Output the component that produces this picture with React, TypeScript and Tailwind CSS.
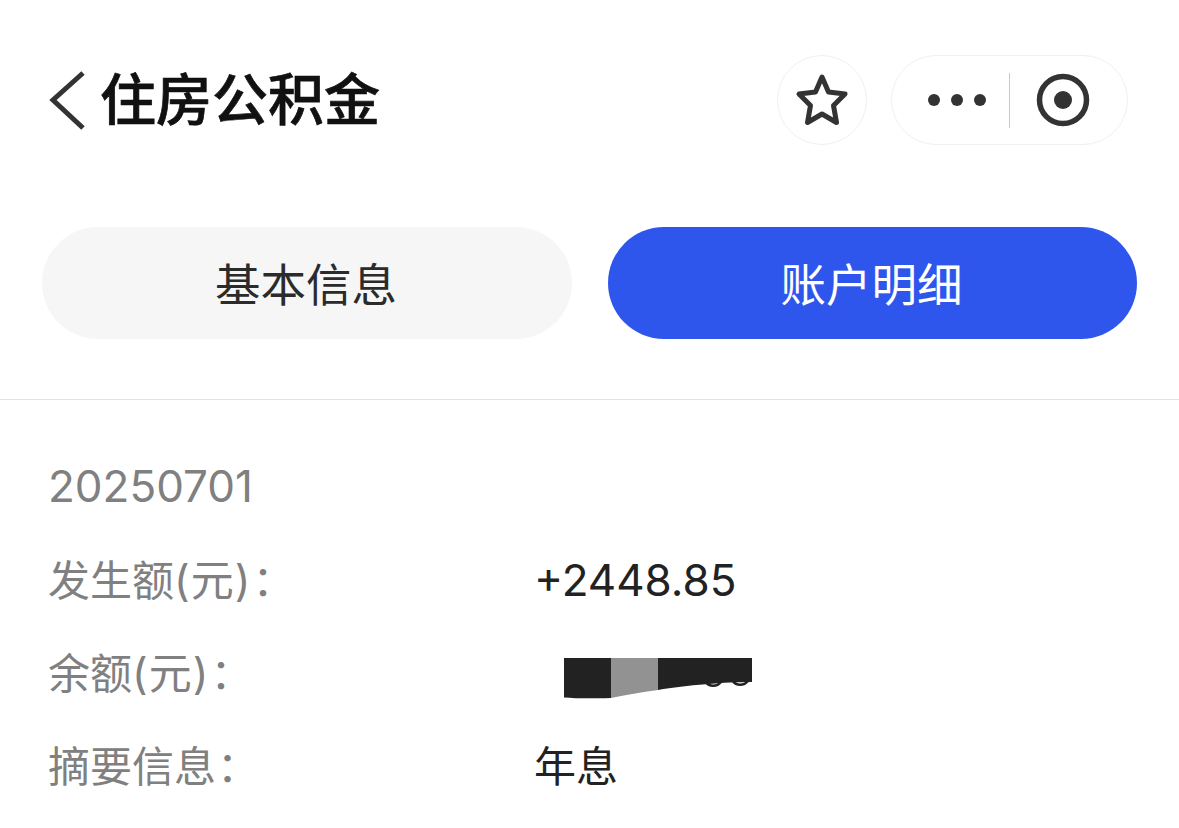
const cjk = "font-['Inter','Noto_Sans_CJK_SC',sans-serif]";

function Row({ label, unit, value, small, redacted }: { label: string; unit?: string; value?: string; small?: boolean; redacted?: boolean }) {
  return (
    <div className="flex h-[93px] items-center">
      <div className="w-[488px] shrink-0 text-[#808080]">
        {label}
        {unit && <span className="tracking-[1px] text-[43px]">{unit}</span>}
        <span className="ml-[1px]">：</span>
      </div>
      {redacted ? (
        <svg width="220" height="50" viewBox="0 0 220 50" fill="none" className="overflow-visible">
          <path d="M170 33C173 38 181 38 185 33M197 32C200 37 208 37 212 32" stroke="#222222" strokeWidth="2.500" />
          <path d="M28 9H75V49C55 49.500 40 49.500 28 48.500Z" fill="#222222" />
          <path d="M75 9H122V41C105 43 90 46 75 49Z" fill="#929292" />
          <path d="M122 9H216V33C190 33 150 36 122 41Z" fill="#222222" />
        </svg>
      ) : small ? (
        <div className="ml-[-2px] text-[#222222]">{value}</div>
      ) : (
        <div className="ml-[-2px] pb-[2px] text-[44px] text-[#222222]">{value}</div>
      )}
    </div>
  );
}

export default function App() {
  return (
    <div className={`h-[828px] w-[1179px] overflow-hidden bg-white ${cjk}`}>
      <header className="flex h-[200px] items-start justify-between pl-[48px] pr-[51px] pt-[55px]">
        <div className="flex h-[90px] items-center gap-[14px]">
          <svg width="38" height="60" viewBox="0 0 38 60" fill="none">
            <path d="M35 3L5 30L35 58" stroke="#333333" strokeWidth="5" />
          </svg>
          <h1 className="text-[56px] font-medium leading-none text-[#111111] [-webkit-text-stroke:0.7px_#111111]">住房公积金</h1>
        </div>
        <div className="flex items-center gap-[24px]">
          <div className="flex h-[90px] w-[90px] items-center justify-center rounded-full border border-[#f0f0f0]">
            <svg width="56" height="54" viewBox="0 0 56 54" fill="none">
              <path d="M28 4L34.500 19L51 21L39.500 32.500L42.500 49.500L28 41L13.500 49.500L16.500 32.500L5 21L21.500 19Z" stroke="#333333" strokeWidth="5" strokeLinejoin="round" />
            </svg>
          </div>
          <div className="flex h-[90px] w-[237px] items-center rounded-full border border-[#f0f0f0]">
            <div className="flex w-[117px] items-center justify-end gap-[11px] pr-[23px]">
              <span className="h-[12px] w-[12px] rounded-full bg-[#333333]" />
              <span className="h-[12px] w-[12px] rounded-full bg-[#333333]" />
              <span className="h-[12px] w-[12px] rounded-full bg-[#333333]" />
            </div>
            <div className="h-[55px] w-px bg-[#c8c8c8]" />
            <div className="flex flex-1 justify-center">
              <svg width="54" height="54" viewBox="0 0 54 54" fill="none" className="mr-[12px]">
                <circle cx="27" cy="27" r="23.500" stroke="#333333" strokeWidth="5.500" />
                <circle cx="27" cy="27" r="9" fill="#333333" />
              </svg>
            </div>
          </div>
        </div>
      </header>

      <div className="flex h-[200px] items-start gap-[36px] border-b border-[#e2e2e2] pl-[42px] pr-[42px] pt-[27px]">
        <button className="flex h-[112px] w-[530px] items-center justify-center rounded-full bg-[#f6f6f6] pr-[2px] pt-[6px] text-[45.5px] text-[#2b2b2b]">基本信息</button>
        <button className="flex h-[112px] w-[529px] items-center justify-center rounded-full bg-[#2f56ec] pr-[2px] pt-[6px] text-[45.5px] text-white">账户明细</button>
      </div>

      <div className="pl-[48px] pt-[41px] text-[42px] leading-none">
        <div className="flex h-[93px] items-center pb-[3px] text-[44px] text-[#808080]">20250701</div>
        <Row label="发生额" unit="(元)" value="+2448.85" />
        <Row label="余额" unit="(元)" redacted />
        <Row label="摘要信息" value="年息" small />
      </div>
    </div>
  );
}
